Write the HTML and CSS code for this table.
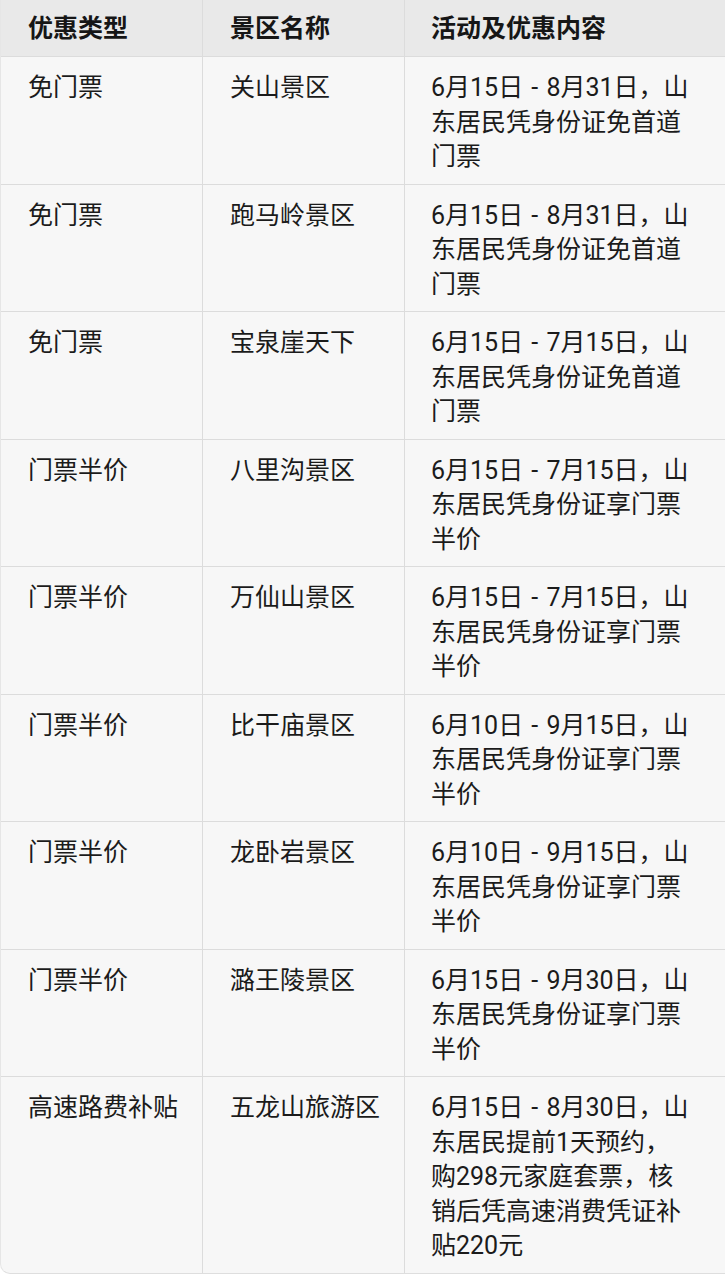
FILE: index.html
```html
<!DOCTYPE html>
<html lang="zh-CN">
<head>
<meta charset="utf-8">
<title>优惠表</title>
<link rel="stylesheet" href="styles.css">
</head>
<body>
<div class="wrap">
<div class="tbl">
<div class="th">优惠类型</div><div class="th">景区名称</div><div class="th end">活动及优惠内容</div>

<div class="td">免门票</div><div class="td">关山景区</div><div class="td end">6月15日 - 8月31日，山<br>东居民凭身份证免首道<br>门票</div>
<div class="td">免门票</div><div class="td">跑马岭景区</div><div class="td end">6月15日 - 8月31日，山<br>东居民凭身份证免首道<br>门票</div>
<div class="td">免门票</div><div class="td">宝泉崖天下</div><div class="td end">6月15日 - 7月15日，山<br>东居民凭身份证免首道<br>门票</div>
<div class="td">门票半价</div><div class="td">八里沟景区</div><div class="td end">6月15日 - 7月15日，山<br>东居民凭身份证享门票<br>半价</div>
<div class="td">门票半价</div><div class="td">万仙山景区</div><div class="td end">6月15日 - 7月15日，山<br>东居民凭身份证享门票<br>半价</div>
<div class="td">门票半价</div><div class="td">比干庙景区</div><div class="td end">6月10日 - 9月15日，山<br>东居民凭身份证享门票<br>半价</div>
<div class="td">门票半价</div><div class="td">龙卧岩景区</div><div class="td end">6月10日 - 9月15日，山<br>东居民凭身份证享门票<br>半价</div>
<div class="td">门票半价</div><div class="td">潞王陵景区</div><div class="td end">6月15日 - 9月30日，山<br>东居民凭身份证享门票<br>半价</div>
<div class="td last">高速路费补贴</div><div class="td last">五龙山旅游区</div><div class="td last end">6月15日 - 8月30日，山<br>东居民提前1天预约，<br>购298元家庭套票，核<br>销后凭高速消费凭证补<br>贴220元</div>
</div>
</div>
</body>
</html>
```

FILE: styles.css
```css
html, body {
  margin: 0;
  padding: 0;
  background: #ffffff;
}
body {
  font-family: "Roboto", "Noto Sans CJK SC", "Noto Sans", sans-serif;
  color: #1b1b1b;
}
.wrap {
  width: 725px;
  height: 1274px;
  box-sizing: border-box;
  border-left: 1px solid #e6e6e6;
  border-bottom: 1px solid #dedede;
  border-radius: 0 0 0 10px;
  overflow: hidden;
  background: #f7f7f7;
}
.tbl {
  display: grid;
  grid-template-columns: 202px 202px 1fr;
  font-size: 25px;
  line-height: 34.5px;
}
.th, .td {
  white-space: nowrap;
  border-right: 1px solid #dcdcdc;
  border-bottom: 1px solid #dcdcdc;
  padding-left: 27px;
}
.end {
  border-right: none;
  padding-left: 26px;
}
.th {
  background: #e9e9e9;
  font-weight: 700;
  padding-top: 12px;
  padding-bottom: 9.5px;
  color: #161616;
}
.td {
  padding-top: 14.25px;
  padding-bottom: 8.75px;
  font-weight: 400;
  word-spacing: 2px;
}
.last {
  border-bottom: none;
}
```
